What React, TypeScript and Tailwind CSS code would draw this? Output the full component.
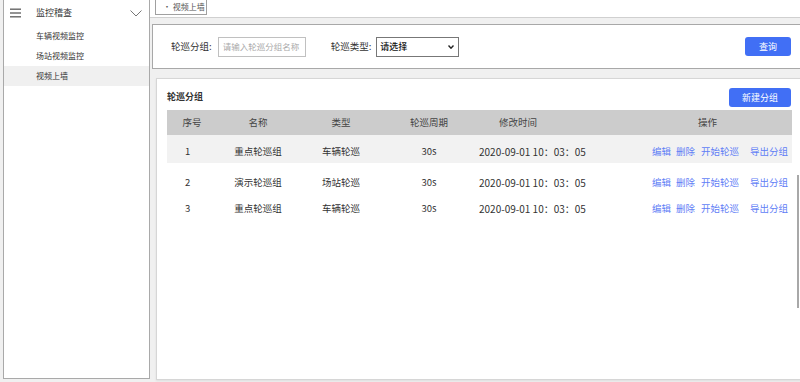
const rows = [
  { id: "1", name: "重点轮巡组", type: "车辆轮巡", period: "30s", time: "2020-09-01 10：03：05" },
  { id: "2", name: "演示轮巡组", type: "场站轮巡", period: "30s", time: "2020-09-01 10：03：05" },
  { id: "3", name: "重点轮巡组", type: "车辆轮巡", period: "30s", time: "2020-09-01 10：03：05" },
];

const rowStyles = [
  "h-[28px] pt-[4px] bg-[#f2f2f2]",
  "h-[32px] pt-[6px]",
  "h-[27px]",
];

const grid = "grid grid-cols-[50px_82px_84px_92px_145px_1fr] items-center";

function Sidebar() {
  return (
    <div className="ml-[3px] w-[147px] h-[379px] shrink-0 bg-white border-l border-r border-b border-[#a9a9a9]">
      <div className="h-[26px] flex items-center">
        <svg width="11" height="10" viewBox="0 0 11 10" className="ml-[6px]">
          <rect x="0" y="0.5" width="11" height="1.4" fill="#666" />
          <rect x="0" y="4.3" width="11" height="1.4" fill="#666" />
          <rect x="0" y="8.1" width="11" height="1.4" fill="#666" />
        </svg>
        <span className="ml-[15px] text-[9px] text-[#333]">监控稽查</span>
        <svg width="12" height="7" viewBox="0 0 12 7" className="ml-auto mr-[7px]">
          <path d="M0.5 0.5 L6 6 L11.5 0.5" fill="none" stroke="#777" strokeWidth="1" />
        </svg>
      </div>
      <div className="h-[20px] flex items-center pl-[32px] text-[8px] text-[#333]">车辆视频监控</div>
      <div className="h-[20px] flex items-center pl-[32px] text-[8px] text-[#333]">场站视频监控</div>
      <div className="h-[20px] flex items-center pl-[32px] text-[8px] text-[#333] bg-[#f0f0f0]">视频上墙</div>
    </div>
  );
}

function Filter() {
  return (
    <div className="mt-[6px] ml-[2px] w-[660px] h-[45px] shrink-0 bg-white border border-[#a8a8a8] flex items-center">
      <span className="ml-[18px] text-[9.5px] text-[#333]">轮巡分组:</span>
      <div className="ml-[6px] w-[88px] h-[20px] border border-[#c0c0c0] flex items-center pl-[4px] text-[8.5px] text-[#aaa] whitespace-nowrap">
        请输入轮巡分组名称
      </div>
      <span className="ml-[25px] text-[9.5px] text-[#333]">轮巡类型:</span>
      <div className="ml-[5px] w-[83px] h-[20px] border border-[#777] flex items-center pl-[3px] pr-[4px] text-[9px] text-[#111] font-medium">
        请选择
        <svg width="6" height="4" viewBox="0 0 6 4" className="ml-auto">
          <path d="M0.5 0.5 L3 3.2 L5.5 0.5" fill="none" stroke="#222" strokeWidth="1.4" />
        </svg>
      </div>
      <button className="ml-auto mr-[20px] w-[46px] h-[19px] rounded-[3px] bg-[#416ff5] text-white text-[9px]">
        查询
      </button>
    </div>
  );
}

function Table() {
  return (
    <div className="ml-[10px] w-[625px]">
      <div className={`${grid} h-[25px] bg-[#cccccc] text-[9.5px] text-[#444]`}>
        <span className="text-center">序号</span>
        <span className="text-center">名称</span>
        <span className="text-center">类型</span>
        <span className="text-center">轮巡周期</span>
        <span className="pl-[24px]">修改时间</span>
        <span className="pl-[78px]">操作</span>
      </div>
      {rows.map((r, i) => (
        <div key={i} className={`${grid} ${rowStyles[i]} text-[9.5px] text-[#333]`}>
          <span className="pl-[18px]">{r.id}</span>
          <span className="text-center">{r.name}</span>
          <span className="text-center">{r.type}</span>
          <span className="text-center">{r.period}</span>
          <span className="pl-[4px] whitespace-nowrap text-[10px]">{r.time}</span>
          <span className="pl-[32px] flex text-[#5f7ef6] whitespace-nowrap">
            <span>编辑</span>
            <span className="ml-[5px]">删除</span>
            <span className="ml-[6px]">开始轮巡</span>
            <span className="ml-[11px]">导出分组</span>
          </span>
        </div>
      ))}
    </div>
  );
}

export default function App() {
  return (
    <div
      className="relative w-[800px] h-[382px] overflow-hidden bg-[#f0f0f0] flex"
      style={{ fontFamily: '"Noto Sans CJK SC", "Noto Sans", sans-serif' }}
    >
      <Sidebar />
      <div className="flex-1 flex flex-col min-w-0">
        <div className="h-[18px] shrink-0 bg-white border-b border-[#d0d0d0] pl-[5px]">
          <div className="w-[52px] h-[15px] border-x border-b border-[#a0a0a0] flex items-center pl-[7px] text-[8px] text-[#555] whitespace-nowrap">
            · 视频上墙
          </div>
        </div>
        <Filter />
        <div className="mt-[9px] ml-[6px] w-[660px] h-[302px] shrink-0 bg-white border border-[#d6d6d6] shadow-[0_1px_2px_rgba(0,0,0,0.08)]">
          <div className="h-[31px] flex items-start">
            <span className="ml-[10px] mt-[11px] text-[9px] font-bold text-[#333] whitespace-nowrap">轮巡分组</span>
            <button className="ml-auto mr-[24px] mt-[9px] w-[62px] h-[19px] rounded-[3px] bg-[#416ff5] text-white text-[9px] whitespace-nowrap">
              新建分组
            </button>
          </div>
          <Table />
        </div>
      </div>
      <div className="absolute left-[797px] top-[175px] w-[2px] h-[133px] bg-[#a8a8a8]" />
    </div>
  );
}
